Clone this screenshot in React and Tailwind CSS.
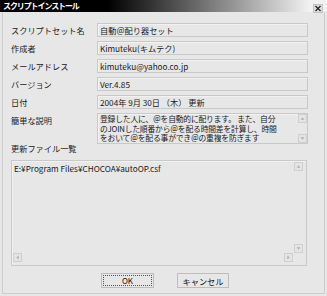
import React from 'react';

const jp = { fontFamily: '"Noto Sans CJK JP", "Noto Sans", sans-serif' };

function Arrow({ dir }) {
  const pts = {
    up: '2,6 4.5,3 7,6',
    down: '2,3 4.5,6 7,3',
    left: '6,2 3,4.5 6,7',
    right: '3,2 6,4.5 3,7',
  }[dir];
  return (
    <div className="w-[9px] h-[9px] border border-[#cfcfcf] bg-[#e4e4e4] flex items-center justify-center">
      <svg width="9" height="9" viewBox="0 0 9 9">
        <polygon points={pts} fill="#b0b0b0" />
      </svg>
    </div>
  );
}

function Row({ label, value }) {
  return (
    <div className="flex items-center h-[14px]">
      <div className="w-[86px] text-[8.2px] text-[#1a1a1a] leading-none">{label}</div>
      <div className="w-[211px] h-[14px] border border-[#c9c9c9] shadow-[inset_1px_1px_0_#f2f2f2] flex items-center pl-[2px] text-[8.2px] text-[#1a1a1a] leading-none whitespace-nowrap overflow-hidden">
        {value}
      </div>
    </div>
  );
}

const descLines = [
  '登録した人に、＠を自動的に配ります。 また、自分',
  'のJOINした順番から＠を配る時間差を計算し、時間',
  'をおいて＠を配る事ができ＠の重複を防ぎます',
];

export default function App() {
  return (
    <div className="w-[327px] h-[296px] bg-[#e7e7e7] flex flex-col overflow-hidden" style={jp}>
      {/* Title bar */}
      <div className="h-[12px] flex items-center justify-between pl-[3px] pr-[4px] bg-[linear-gradient(to_right,#000_0%,#000_33%,#f2f2f2_95%)]">
        <span className="text-white font-bold text-[8px] tracking-[-1.1px] leading-none">スクリプトインストール</span>
        <div className="mt-[5px] w-[10px] h-[9px] bg-[#dcdcdc] border border-[#c4c4c4] flex items-center justify-center">
          <svg width="8" height="7" viewBox="0 0 8 7">
            <path d="M1.5 1 L6.5 6 M6.5 1 L1.5 6" stroke="#222" strokeWidth="1.2" />
          </svg>
        </div>
      </div>

      {/* Body */}
      <div className="flex-1 mx-[2px] mb-[2px] border-x border-b border-[#cdcdcd] px-[8px] pt-[11px] flex flex-col">
        <div className="flex flex-col gap-[4px]">
          <Row label="スクリプトセット名" value="自動＠配り器セット" />
          <Row label="作成者" value="Kimuteku(キムテク)" />
          <Row label="メールアドレス" value="kimuteku@yahoo.co.jp" />
          <Row label="バージョン" value="Ver.4.85" />
          <Row label="日付" value="2004年 9月 30日 （木） 更新" />
          <div className="flex">
            <div className="w-[86px] pt-[3px] text-[8.2px] text-[#1a1a1a] leading-none">簡単な説明</div>
            <div className="w-[211px] h-[31px] border border-[#c9c9c9] shadow-[inset_1px_1px_0_#f2f2f2] flex">
              <div className="flex-1 pl-[2px] flex flex-col text-[7.8px] text-[#1a1a1a] tracking-[-0.2px] whitespace-nowrap overflow-hidden">
                {descLines.map((line, i) => (
                  <div key={i} className="h-[9.6px] leading-[9.6px]">{line}</div>
                ))}
              </div>
              <div className="w-[9px] flex flex-col justify-between">
                <Arrow dir="up" />
                <Arrow dir="down" />
              </div>
            </div>
          </div>
        </div>

        <div className="mt-0 text-[8.2px] text-[#1a1a1a] leading-none">更新ファイル一覧</div>

        <div className="mt-[8px] w-[296px] h-[106px] border border-[#c9c9c9] shadow-[inset_1px_1px_0_#f2f2f2] grid grid-cols-[1fr_11px] grid-rows-[1fr_11px] p-[1px]">
          <div className="pl-[1px] pt-[2px] text-[8.2px] leading-none text-[#1a1a1a] whitespace-nowrap overflow-hidden">
            E:¥Program Files¥CHOCOA¥autoOP.csf
          </div>
          <div className="flex flex-col justify-between">
            <Arrow dir="up" />
            <Arrow dir="down" />
          </div>
          <div className="flex justify-between pr-[1px]">
            <Arrow dir="left" />
            <Arrow dir="right" />
          </div>
          <div />
        </div>

        <div className="mt-[7px] flex gap-[23px] pl-[90px]">
          <button className="w-[53px] h-[15px] border border-[#bdbdbd] bg-[#e7e7e7] p-[1px]">
            <div className="w-full h-full border border-dotted border-[#555] flex items-center justify-center text-[8px] leading-none text-[#111]">
              OK
            </div>
          </button>
          <button className="w-[52px] h-[15px] border border-[#bdbdbd] bg-[#e7e7e7] flex items-center justify-center text-[8.2px] leading-none text-[#111]">
            キャンセル
          </button>
        </div>
      </div>
    </div>
  );
}
